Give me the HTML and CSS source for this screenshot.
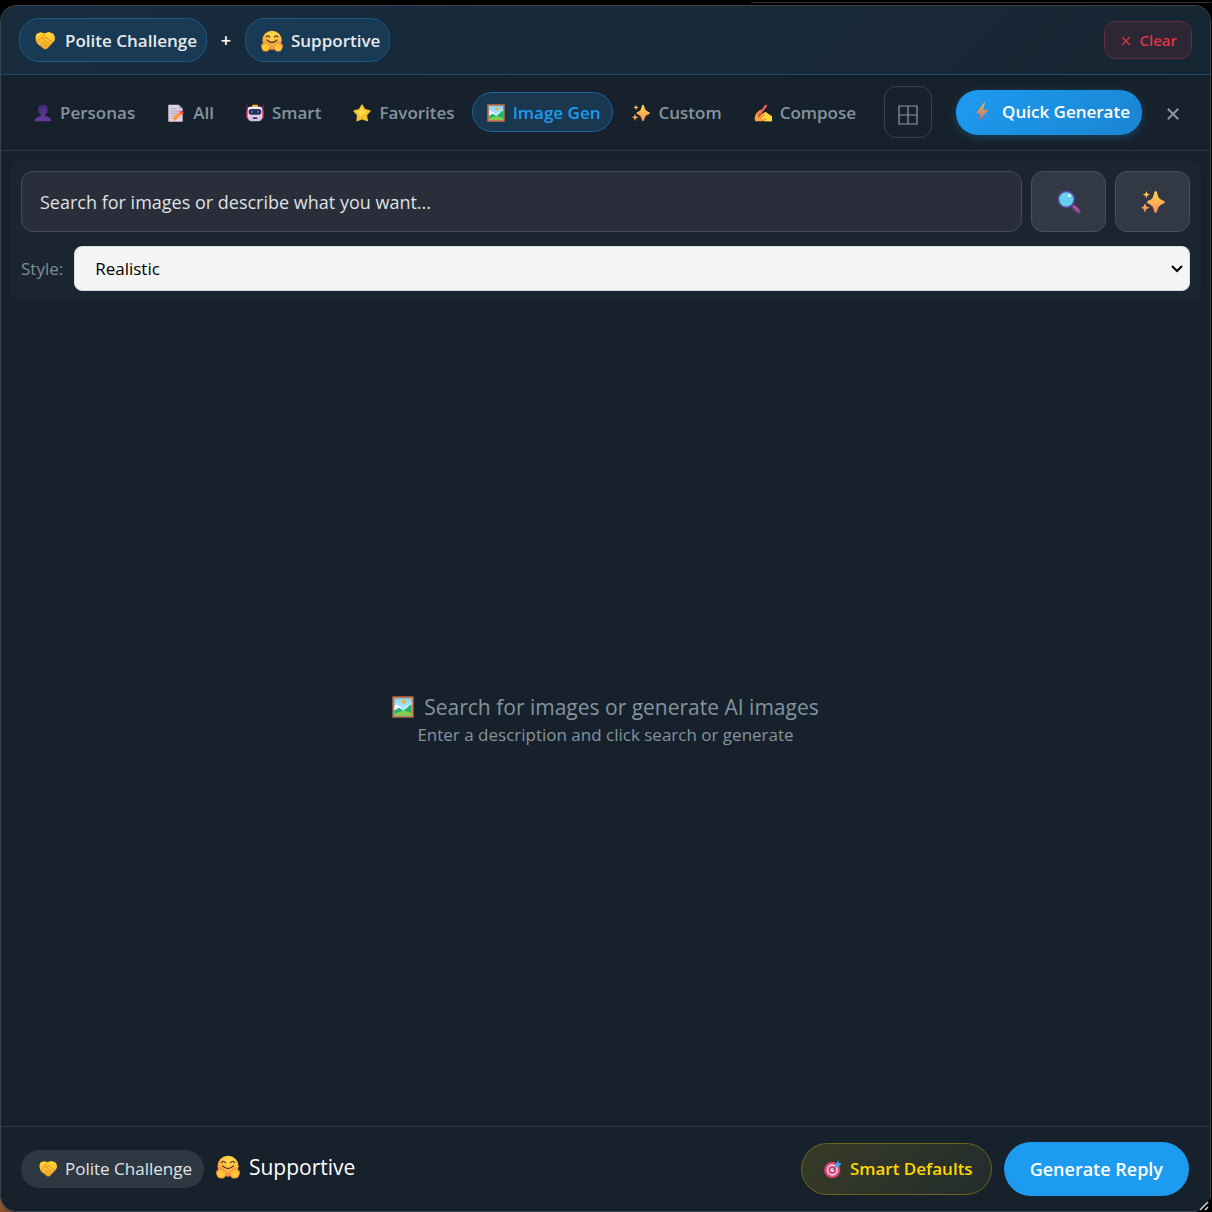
FILE: index.html
```html
<!DOCTYPE html>
<html lang="en">
<head>
<meta charset="utf-8">
<meta name="viewport" content="width=device-width, initial-scale=1">
<title>Image Gen</title>
<link rel="stylesheet" href="styles.css">
</head>
<body>
<svg class="sprite" aria-hidden="true">
  <defs>
    <linearGradient id="g-hand" x1="0" y1="0" x2="0" y2="1"><stop offset="0" stop-color="#ffd52e"/><stop offset="1" stop-color="#f9a832"/></linearGradient>
    <radialGradient id="g-face" cx=".6" cy=".2" r=".9"><stop offset="0" stop-color="#ffe04a"/><stop offset=".6" stop-color="#ffb23f"/><stop offset="1" stop-color="#f0704f"/></radialGradient>
    <linearGradient id="g-person" x1="0" y1="0" x2="0" y2="1"><stop offset="0" stop-color="#48297a"/><stop offset="1" stop-color="#653b98"/></linearGradient>
    <linearGradient id="g-spark" x1="0" y1="0" x2="0" y2="1"><stop offset="0" stop-color="#ffd84e"/><stop offset="1" stop-color="#ff8a58"/></linearGradient>
    <linearGradient id="g-bolt" x1="0" y1="0" x2="0" y2="1"><stop offset="0" stop-color="#e3b94c"/><stop offset=".55" stop-color="#d58968"/><stop offset="1" stop-color="#e2475f"/></linearGradient>
    <linearGradient id="g-robot" x1="0" y1="0" x2="0" y2="1"><stop offset="0" stop-color="#f6f0fa"/><stop offset="1" stop-color="#cdbade"/></linearGradient>
    <linearGradient id="g-sky" x1="0" y1="0" x2="0" y2="1"><stop offset="0" stop-color="#80d8fa"/><stop offset="1" stop-color="#d5f3ff"/></linearGradient>
  </defs>
  <symbol id="handshake" viewBox="0 0 60 60">
    <path fill="url(#g-hand)" d="M5 8 16 4 28 7 42 3 55 8Q63 19 58 30L38 52Q31 58 24 52L7 38Q-3 22 5 8Z"/>
    <path fill="none" stroke="#d9821b" stroke-width="2.4" stroke-linecap="round" stroke-linejoin="round" d="M29 9 19 18Q18 25 26 23L33 19 53 34M43 42 29 29M36 48 23 35M28 53 16 42M9 31 15 25"/>
    <path fill="none" stroke="#ffeb78" stroke-width="2" stroke-linecap="round" d="M34 14 52 28M8 14l7-4"/>
  </symbol>
  <symbol id="hug" viewBox="0 0 66 66">
    <circle cx="33" cy="31" r="29" fill="url(#g-face)"/>
    <path fill="none" stroke="#593631" stroke-width="3.6" stroke-linecap="round" d="M15 21Q20 14 26 21M40 21Q46 14 51 21M18 30Q33 45 48 30"/>
    <g fill="#ffc636" stroke="#e66f46" stroke-width="1.5">
      <path d="M6 62Q-1 52 2 43 4 40 7 45L6 37Q9 33 12 38L14 43 15 36Q19 33 20 40L21 46Q27 40 28 47L24 61Q17 67 6 62Z"/>
      <path d="M60 62Q67 52 64 43 62 40 59 45L60 37Q57 33 54 38L52 43 51 36Q47 33 46 40L45 46Q39 40 38 47L42 61Q49 67 60 62Z"/>
    </g>
  </symbol>
  <symbol id="person" viewBox="0 0 54 54">
    <path fill="url(#g-person)" d="M27 2C38 2 42 9 41 19 40 27 37 31 33 33V36C45 38 52 43 52 52H2C2 43 9 38 21 36V33C17 31 14 27 13 19 12 9 16 2 27 2Z"/>
  </symbol>
  <symbol id="memo" viewBox="0 0 54 54">
    <path fill="#ddd2e6" d="M4 2H35L47 14V53H4Z"/><path fill="#b9a8ca" d="M35 2V14H47Z"/>
    <path stroke="#a696b4" stroke-width="2.5" d="M11 14H28M11 21H38M11 28H34M11 35H23M11 42H16"/>
    <path fill="#ff9442" d="M16 43 37 23 45 31 24 50Z"/><path fill="#f1425a" d="M37 23 43 19 51 26 45 32Z"/><path fill="#ffc99a" d="M16 43 14 52 24 50Z"/>
  </symbol>
  <symbol id="robot" viewBox="0 0 54 54">
    <path stroke="#b72559" stroke-width="3" stroke-linecap="round" d="M3 3V34M51 3V34"/>
    <rect x="1" y="20" width="8" height="24" rx="3" fill="#dc2862"/><rect x="45" y="20" width="8" height="24" rx="3" fill="#dc2862"/>
    <rect x="18" y="2" width="18" height="8" rx="3" fill="#ffae25"/>
    <path fill="url(#g-robot)" d="M12 8H42Q49 8 49 17V37Q49 52 37 52H17Q5 52 5 37V17Q5 8 12 8Z"/>
    <rect x="8" y="15" width="38" height="17" rx="8" fill="#302b50"/>
    <path stroke="#2389e8" stroke-width="5" stroke-linecap="round" d="M18 22v3M36 22v3"/><rect x="20" y="40" width="14" height="5" rx="2" fill="#443457"/>
  </symbol>
  <symbol id="star" viewBox="0 0 54 54">
    <path fill="#f3c331" stroke="#f3c331" stroke-width="4" stroke-linejoin="round" d="M27 3 35 17 51 21 40 33 43 50 27 44 12 50 14 33 3 21 19 17Z"/>
    <path fill="#ffdc47" d="M26 7 32 20 45 23 31 30 21 38 17 25 8 22 20 19Z"/>
  </symbol>
  <symbol id="picture" viewBox="0 0 54 54">
    <path fill="#c77853" d="M1 1H53V53H1Z"/><path fill="url(#g-sky)" d="M6 6H48V48H6Z"/>
    <path fill="#eff9ff" d="M6 25Q10 17 16 24 22 24 23 30L6 34ZM31 30Q35 24 40 24L48 16V30Z"/>
    <circle cx="29" cy="14" r="5" fill="#f8ae23"/>
    <path fill="#20b36c" d="M6 36 17 29 28 37 44 22 48 20V48H6Z"/><path fill="#86cc4d" d="M6 45Q27 30 48 42V48H6Z"/>
  </symbol>
  <symbol id="sparkles" viewBox="0 0 54 54">
    <path fill="url(#g-spark)" d="M33 2Q36 2 37 9 39 19 46 22L52 25Q55 28 52 30L45 33Q39 36 37 45 36 52 33 52T29 45Q27 36 21 33L15 30Q12 28 15 25L21 22Q27 19 29 9 30 2 33 2ZM12 2 14 8 20 10 14 13 12 19 10 13 4 10 10 8ZM9 30 12 37 20 40 12 43 9 51 6 43 0 40 6 37Z"/>
  </symbol>
  <symbol id="writing" viewBox="0 0 54 54">
    <path fill="#fda431" d="M3 48Q0 36 8 27L19 17Q26 16 23 23L16 36 28 28Q33 25 37 27L53 38V52H4Z"/>
    <path fill="#ffd53c" d="M17 39 32 25Q37 22 39 27L54 37V52H33Z"/>
    <path fill="none" stroke="#ee753e" stroke-width="3" stroke-linecap="round" d="M17 42 32 32M25 50 36 45M9 29 16 33"/>
    <path stroke="#ef4c52" stroke-width="7" stroke-linecap="round" d="M16 33 36 5"/><path stroke="#ff8c79" stroke-width="2" d="M18 28 35 5"/><path fill="#c95352" d="M11 41 13 30 20 35Z"/>
  </symbol>
  <symbol id="bolt" viewBox="0 0 54 60">
    <path fill="url(#g-bolt)" d="M34 1 9 34 23 35 17 59 45 24 30 23 36 2Z"/>
  </symbol>
  <symbol id="magnifier" viewBox="0 0 72 72">
    <path stroke="#844584" stroke-width="13" stroke-linecap="round" d="M50 50 64 64"/><path stroke="#af68a7" stroke-width="4" stroke-linecap="round" d="M51 49 64 61"/>
    <circle cx="28" cy="28" r="24" fill="#65d0ed" stroke="#57499c" stroke-width="5"/><ellipse cx="37" cy="17" rx="5" ry="4" fill="#d6f6ff"/>
  </symbol>
  <symbol id="target" viewBox="0 0 54 54">
    <circle cx="25" cy="30" r="24" fill="#e44478"/><circle cx="25" cy="30" r="17" fill="#e9d8e8"/><circle cx="25" cy="30" r="12" fill="#dc3e71"/><circle cx="25" cy="30" r="6" fill="#e9d8e8"/>
    <path stroke="#376bb9" stroke-width="3" d="M26 30 43 12"/><path fill="#38a9ec" d="M34 15 43 1 45 10 54 12 41 21 33 22Z"/>
  </symbol>
  <symbol id="cross" viewBox="0 0 16 16"><path fill="none" stroke="currentColor" stroke-width="2.2" d="M2 2 14 14M14 2 2 14"/></symbol>
  <symbol id="grid" viewBox="0 0 20 20"><path fill="none" stroke="currentColor" stroke-width="1.2" d="M1 1H19V19H1ZM10 1V19M1 10H19"/></symbol>
</svg>

<main class="panel">
  <header class="selection">
    <button class="chip" type="button"><svg class="icon icon-lg"><use href="#handshake"/></svg>Polite Challenge</button>
    <span class="plus">+</span>
    <button class="chip" type="button"><svg class="icon icon-xl"><use href="#hug"/></svg>Supportive</button>
    <button class="clear" type="button"><svg class="icon icon-xs"><use href="#cross"/></svg>Clear</button>
  </header>

  <nav class="toolbar">
    <div class="tabs">
      <button class="tab" type="button"><svg class="icon"><use href="#person"/></svg>Personas</button>
      <button class="tab" type="button"><svg class="icon"><use href="#memo"/></svg>All</button>
      <button class="tab" type="button"><svg class="icon"><use href="#robot"/></svg>Smart</button>
      <button class="tab" type="button"><svg class="icon"><use href="#star"/></svg>Favorites</button>
      <button class="tab tab-active" type="button"><svg class="icon"><use href="#picture"/></svg>Image Gen</button>
      <button class="tab" type="button"><svg class="icon"><use href="#sparkles"/></svg>Custom</button>
      <button class="tab" type="button"><svg class="icon"><use href="#writing"/></svg>Compose</button>
    </div>
    <button class="layout" type="button" aria-label="Toggle layout"><svg class="icon icon-lg"><use href="#grid"/></svg></button>
    <button class="quick" type="button"><svg class="icon icon-lg"><use href="#bolt"/></svg>Quick Generate</button>
    <button class="close" type="button" aria-label="Close"><svg class="icon icon-sm"><use href="#cross"/></svg></button>
  </nav>

  <section class="search">
    <div class="search-row">
      <input class="query" type="text" aria-label="Image description" placeholder="Search for images or describe what you want...">
      <button class="square" type="button" aria-label="Search"><svg class="icon icon-2xl"><use href="#magnifier"/></svg></button>
      <button class="square" type="button" aria-label="Generate"><svg class="icon icon-2xl"><use href="#sparkles"/></svg></button>
    </div>
    <div class="style-row">
      <label for="style">Style:</label>
      <select id="style" class="style-select"><option>Realistic</option><option>Illustration</option></select>
    </div>
  </section>

  <section class="empty">
    <p class="empty-title"><svg class="icon icon-xl"><use href="#picture"/></svg>Search for images or generate AI images</p>
    <p class="empty-hint">Enter a description and click search or generate</p>
  </section>

  <footer class="actions">
    <span class="tag"><svg class="icon"><use href="#handshake"/></svg>Polite Challenge</span>
    <span class="tone"><svg class="icon icon-2xl"><use href="#hug"/></svg>Supportive</span>
    <button class="defaults" type="button"><svg class="icon"><use href="#target"/></svg>Smart Defaults</button>
    <button class="generate" type="button">Generate Reply</button>
  </footer>
  <svg class="resizer" viewBox="0 0 14 14" aria-hidden="true"><path d="M0 14 14 0V14Z" fill="#000"/><path d="M3 12 11 4M8 12l3-3" stroke="#d5d9dc" stroke-width="1.5"/></svg>
</main>
</body>
</html>
```
FILE: styles.css
```css
* { box-sizing: border-box; }

body {
  margin: 0;
  background:
    linear-gradient(#333, #333) right 2px / 38% 1px no-repeat,
    linear-gradient(90deg, #8a5630, #6b4228) left bottom / 14px 14px no-repeat,
    #000;
  color: #fff;
  font: 18px/24px "Open Sans", "Noto Sans", sans-serif;
}

button, input, select { font: inherit; color: inherit; margin: 0; }
button {
  display: flex;
  align-items: center;
  justify-content: center;
  border: 1px solid transparent;
  background: none;
  white-space: nowrap;
  cursor: pointer;
}

.sprite { position: absolute; width: 0; height: 0; }
.icon { width: 18px; height: 18px; flex: none; }
.icon-xs { width: 10px; height: 10px; }
.icon-sm { width: 14px; height: 14px; }
.icon-lg { width: 20px; height: 20px; }
.icon-xl { width: 22px; height: 22px; }
.icon-2xl { width: 24px; height: 24px; }

.panel {
  position: relative;
  display: flex;
  flex-direction: column;
  min-height: calc(100vh - 5px);
  margin: 5px 1px 0 0;
  border: 1px solid #38444d;
  border-radius: 16px;
  background: #17212b;
}

.selection {
  display: flex;
  align-items: center;
  padding: 12px 18px;
  border-bottom: 1px solid #1b4b6e;
  border-radius: 15px 15px 0 0;
  background: linear-gradient(135deg, #182c3e, #172633);
}
.chip {
  gap: 10px;
  height: 44px;
  padding: 2px 9px 0 15px;
  border-color: #1b5a87;
  border-radius: 20px;
  background: #183a54;
  color: #e7e9ea;
  font-size: 17px;
  font-weight: 600;
}
.chip .icon-xl { margin-right: -2px; }
.plus { width: 38px; text-align: center; font-weight: 600; }
.clear {
  gap: 8px;
  height: 38px;
  margin-left: auto;
  padding: 0 14px 0 16px;
  border-color: #63303f;
  border-radius: 12px;
  background: #2d2735;
  color: #dc3545;
  font-size: 15px;
  font-weight: 600;
}
.clear .icon { margin-top: 2px; }

.toolbar {
  display: flex;
  align-items: center;
  padding: 11px 20px 12px 18px;
  border-bottom: 1px solid #2c3741;
}
.tabs { display: flex; gap: 4px; }
.tab {
  gap: 8px;
  height: 40px;
  padding: 2px 12px 0 14px;
  border-radius: 20px;
  color: #8493a0;
  font-size: 17px;
  font-weight: 600;
}
.tab-active { border-color: #1c659c; background: #19384f; color: #1d9bf0; }
.layout {
  width: 48px;
  height: 52px;
  margin-left: auto;
  padding: 6px 0 0;
  border-color: #35414b;
  border-radius: 12px;
  color: #8b98a5;
}
.quick {
  gap: 10px;
  height: 45px;
  margin-left: 24px;
  padding: 0 12px 0 16px;
  border: 0;
  border-radius: 22px;
  background: linear-gradient(135deg, #1d9bf0, #1a85d2);
  box-shadow: 0 2px 8px #1d9bf04d;
  font-size: 17px;
  font-weight: 600;
}
.close { width: 34px; height: 34px; margin-left: 14px; padding: 4px 0 0; color: #8b98a5; }

.search {
  display: flex;
  flex-direction: column;
  gap: 14px;
  margin: 9px;
  padding: 11px;
  border-radius: 12px;
  background: #1b252f;
}
.search-row { display: flex; gap: 9px; }
.query {
  flex: 1;
  min-width: 0;
  height: 61px;
  padding: 0 18px;
  border: 1px solid #434c57;
  border-radius: 12px;
  background: #292e3a;
}
.query::placeholder { color: #dfe1e3; opacity: 1; }
.square { width: 75px; height: 61px; border-color: #48515b; border-radius: 12px; background: #323844; }
.style-row { display: flex; align-items: center; gap: 11px; color: #7f8d99; font-size: 17px; }
.style-select {
  appearance: none;
  flex: 1;
  min-width: 0;
  height: 45px;
  padding: 0 30px 0 20px;
  border: 1px solid #d4dadd;
  border-radius: 8px;
  background: #f3f5f4 url("data:image/svg+xml,%3Csvg xmlns='http://www.w3.org/2000/svg' width='14' height='10'%3E%3Cpath d='M2 2l5 5 5-5' fill='none' stroke='%23000' stroke-width='2'/%3E%3C/svg%3E") right 5px center no-repeat;
  color: #000;
}

.empty {
  flex: 1;
  display: flex;
  flex-direction: column;
  align-items: center;
  justify-content: center;
  gap: 2px;
  padding-top: 2px;
  color: #8493a0;
  text-align: center;
}
.empty p { margin: 0; }
.empty-title { display: flex; align-items: center; gap: 10px; font-size: 21px; line-height: 28px; }
.empty-hint { font-size: 17px; }

.actions {
  display: flex;
  align-items: center;
  padding: 15px 21px 15px 20px;
  border-top: 1px solid #2c3741;
}
.tag {
  display: flex;
  align-items: center;
  gap: 8px;
  height: 38px;
  padding: 0 12px 0 18px;
  border-radius: 19px;
  background: #2e3842;
  color: #e1e4e6;
  font-size: 17px;
}
.tone { display: flex; align-items: center; gap: 9px; margin-left: 12px; padding-bottom: 4px; font-size: 21px; }
.defaults {
  gap: 8px;
  height: 52px;
  margin-left: auto;
  padding: 0 18px 0 22px;
  border-color: #6b641d;
  border-radius: 26px;
  background: linear-gradient(135deg, #383b27, #222c2c);
  color: #ffd700;
  font-size: 17px;
  font-weight: 600;
}
.generate {
  height: 54px;
  margin-left: 12px;
  padding: 0 25px;
  border-radius: 27px;
  background: #1d9bf0;
  font-weight: 600;
}
.resizer { position: absolute; right: -1px; bottom: -1px; width: 14px; height: 14px; }
```
